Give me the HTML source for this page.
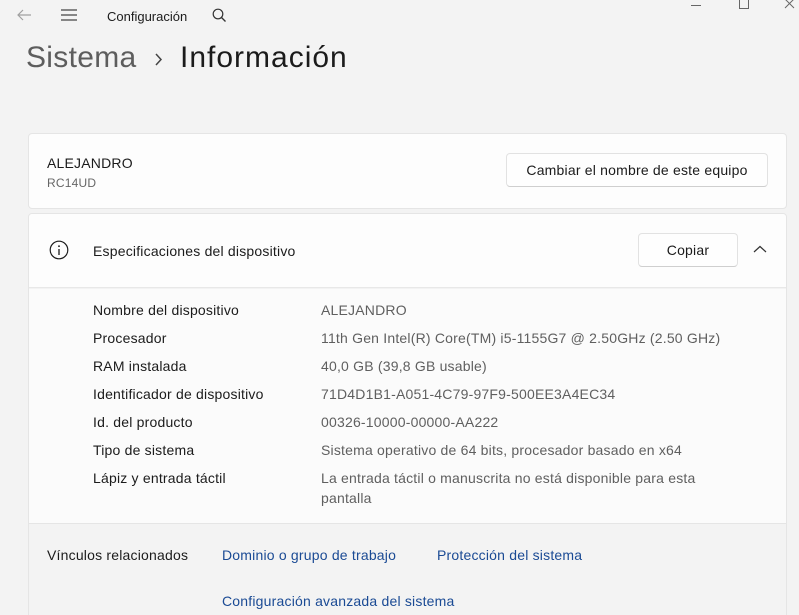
<!DOCTYPE html>
<html><head><meta charset="utf-8"><style>
*{margin:0;padding:0;box-sizing:border-box}
html,body{width:799px;height:615px;overflow:hidden}
body{background:#f3f3f3;font-family:"Segoe UI","Liberation Sans",sans-serif;color:#1b1b1b;position:relative;font-size:14px;letter-spacing:0.2px}
.abs{position:absolute;white-space:nowrap}
.card{position:absolute;left:28px;width:759px;background:#fdfdfd;border:1px solid #e5e5e5;border-radius:4px}
.btn{position:absolute;background:#fefefe;border:1px solid #e2e2e2;border-bottom-color:#cfcfcf;border-radius:4px;font-size:14px;text-align:center}
.lab{position:absolute;left:93px;font-size:14px;color:#1b1b1b;white-space:nowrap}
.val{position:absolute;left:321px;font-size:14px;color:#5f5f5f;line-height:20px;white-space:nowrap}
.link{color:#1a4a94;font-size:14px;position:absolute;white-space:nowrap}
</style></head><body>
<svg class="abs" style="left:16px;top:8px" width="16" height="14"><path d="M15 7H2M7 2L2 7l5 5" stroke="#a0a0a0" stroke-width="1.2" fill="none"/></svg>
<svg class="abs" style="left:60px;top:8px" width="18" height="14"><path d="M1 2h16M1 7h16M1 12h16" stroke="#444" stroke-width="1.3"/></svg>
<div class="abs" style="left:107px;top:9px;font-size:13px;color:#1b1b1b;letter-spacing:0">Configuración</div>
<svg class="abs" style="left:212px;top:8px" width="15" height="15"><circle cx="6" cy="6" r="4.8" stroke="#333" stroke-width="1.2" fill="none"/><path d="M9.5 9.5L13.5 13.5" stroke="#333" stroke-width="1.3"/></svg>
<div class="abs" style="left:691px;top:5px;width:10px;border-top:1px solid #666"></div>
<div class="abs" style="left:739px;top:0px;width:10px;height:9px;border:1px solid #666;border-top:none"></div>
<svg class="abs" style="left:784px;top:0" width="12" height="10"><path d="M1 -1L10 8M10 -1L1 8" stroke="#666" stroke-width="1"/></svg>
<div class="abs" style="left:26px;top:41px;font-size:30px;color:#5d5d5d;letter-spacing:0.3px">Sistema</div>
<svg class="abs" style="left:154px;top:53px" width="10" height="14"><path d="M2 1l5 5.5L2 12" stroke="#444" stroke-width="1.5" fill="none"/></svg>
<div class="abs" style="left:180px;top:41px;font-size:30px;color:#1b1b1b;letter-spacing:1px">Información</div>

<div class="card" style="top:133px;height:76px">
<div class="abs" style="left:18px;top:21px;font-size:14px">ALEJANDRO</div>
<div class="abs" style="left:18px;top:42px;font-size:12px;color:#666">RC14UD</div>
<div class="btn" style="left:477px;top:19px;width:262px;height:34px;line-height:32px">Cambiar el nombre de este equipo</div>
</div>

<div class="card" style="top:213px;height:420px;background:#f3f3f3;overflow:hidden">
<div style="position:absolute;left:0;top:0;width:100%;height:74px;background:#fdfdfd;border-bottom:1px solid #e8e8e8"></div>
<div style="position:absolute;left:0;top:75px;width:100%;height:235px;background:#fbfbfb;border-bottom:1px solid #e5e5e5"></div>
<svg class="abs" style="left:20px;top:26px" width="20" height="20"><circle cx="10" cy="10" r="8.8" stroke="#1b1b1b" stroke-width="1.2" fill="none"/><path d="M10 9v6" stroke="#1b1b1b" stroke-width="1.3"/><circle cx="10" cy="6.2" r="0.9" fill="#1b1b1b"/></svg>
<div class="abs" style="left:64px;top:29px;font-size:14px">Especificaciones del dispositivo</div>
<div class="btn" style="left:609px;top:19px;width:100px;height:34px;line-height:32px">Copiar</div>
<svg class="abs" style="left:724px;top:31px" width="14" height="9"><path d="M1 7l6-5.5 6 5.5" stroke="#333" stroke-width="1.2" fill="none"/></svg>
</div>

<div class="lab" style="top:302px">Nombre del dispositivo</div><div class="val" style="top:300px">ALEJANDRO</div>
<div class="lab" style="top:330px">Procesador</div><div class="val" style="top:328px">11th Gen Intel(R) Core(TM) i5-1155G7 @ 2.50GHz (2.50 GHz)</div>
<div class="lab" style="top:358px">RAM instalada</div><div class="val" style="top:356px">40,0 GB (39,8 GB usable)</div>
<div class="lab" style="top:386px">Identificador de dispositivo</div><div class="val" style="top:384px">71D4D1B1-A051-4C79-97F9-500EE3A4EC34</div>
<div class="lab" style="top:414px">Id. del producto</div><div class="val" style="top:412px">00326-10000-00000-AA222</div>
<div class="lab" style="top:442px">Tipo de sistema</div><div class="val" style="top:440px">Sistema operativo de 64 bits, procesador basado en x64</div>
<div class="lab" style="top:470px">Lápiz y entrada táctil</div><div class="val" style="top:468px">La entrada táctil o manuscrita no está disponible para esta<br>pantalla</div>

<div class="abs" style="left:47px;top:547px;font-size:14px">Vínculos relacionados</div>
<div class="link" style="left:222px;top:547px">Dominio o grupo de trabajo</div>
<div class="link" style="left:437px;top:547px">Protección del sistema</div>
<div class="link" style="left:222px;top:593px">Configuración avanzada del sistema</div>
</body></html>
